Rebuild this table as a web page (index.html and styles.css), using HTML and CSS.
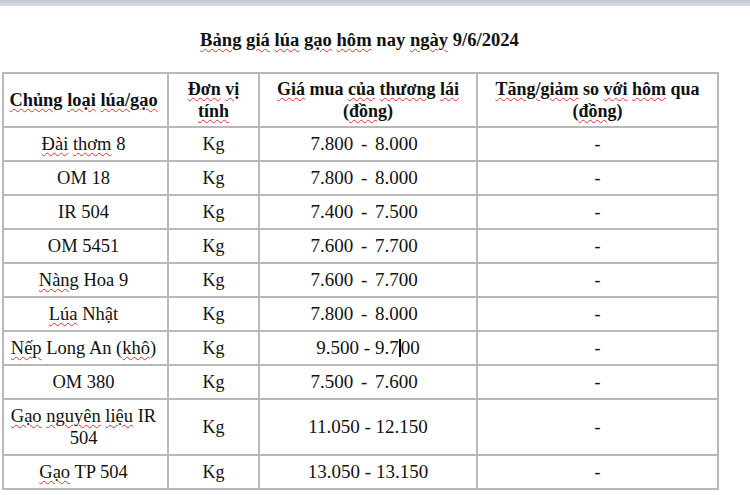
FILE: index.html
```html
<!DOCTYPE html>
<html lang="vi">
<head>
<meta charset="utf-8">
<title>Bảng giá lúa gạo</title>
<link rel="stylesheet" href="styles.css">
</head>
<body>
<div class="topbar"></div>
<div class="doc">
  <h1 class="title"><span class="sp">Bảng</span> <span class="sp">giá</span> <span class="sp">lúa</span> <span class="sp">gạo</span> <span class="sp">hôm</span> nay <span class="sp">ngày</span> 9/6/2024</h1>
  <table class="price">
    <colgroup>
      <col class="c1"><col class="c2"><col class="c3"><col class="c4">
    </colgroup>
    <thead>
      <tr class="head">
        <th class="name"><span class="sp">Chủng</span> <span class="sp">loại</span> <span class="sp">lúa/gạo</span></th>
        <th><span class="sp">Đơn</span> <span class="sp">vị</span><br><span class="sp">tính</span></th>
        <th><span class="sp">Giá</span> mua <span class="sp">của</span> <span class="sp">thương</span> <span class="sp">lái</span><br>(<span class="sp">đồng</span>)</th>
        <th><span class="sp">Tăng/giảm</span> so <span class="sp">với</span> <span class="sp">hôm</span> qua<br>(<span class="sp">đồng</span>)</th>
      </tr>
    </thead>
    <tbody>
      <tr><td class="name"><span class="sp">Đài</span> <span class="sp">thơm</span> 8</td><td>Kg</td><td class="num wide">7.800 - 8.000&nbsp;</td><td>-</td></tr>
      <tr><td class="name">OM 18</td><td>Kg</td><td class="num wide">7.800 - 8.000&nbsp;</td><td>-</td></tr>
      <tr><td class="name">IR 504</td><td>Kg</td><td class="num wide">7.400 - 7.500&nbsp;</td><td>-</td></tr>
      <tr><td class="name">OM 5451</td><td>Kg</td><td class="num wide">7.600 - 7.700&nbsp;</td><td>-</td></tr>
      <tr><td class="name"><span class="sp">Nàng</span> Hoa 9</td><td>Kg</td><td class="num wide">7.600 - 7.700&nbsp;</td><td>-</td></tr>
      <tr><td class="name"><span class="sp">Lúa</span> Nhật</td><td>Kg</td><td class="num wide">7.800 - 8.000&nbsp;</td><td>-</td></tr>
      <tr><td class="name"><span class="sp">Nếp</span> Long An (<span class="sp">khô</span>)</td><td>Kg</td><td class="num">9.500 - 9.7<span class="caret"></span>00</td><td>-</td></tr>
      <tr><td class="name">OM 380</td><td>Kg</td><td class="num wide">7.500 - 7.600&nbsp;</td><td>-</td></tr>
      <tr class="tall"><td class="name"><span class="sp">Gạo</span> <span class="sp">nguyên</span> <span class="sp">liệu</span> IR 504</td><td>Kg</td><td class="num">11.050 - 12.150</td><td>-</td></tr>
      <tr><td class="name"><span class="sp">Gạo</span> TP 504</td><td>Kg</td><td class="num">13.050 - 13.150</td><td>-</td></tr>
    </tbody>
  </table>
</div>
</body>
</html>
```
FILE: styles.css
```css
html, body {
  margin: 0;
  padding: 0;
  background: #ffffff;
}
body {
  font-family: "Liberation Serif", "Times New Roman", serif;
  color: #111111;
  font-size: 18px;
  width: 750px;
  height: 495px;
  overflow: hidden;
}
.topbar {
  height: 6px;
  background: linear-gradient(#c4c9cf, #d9dde2);
}
.doc {
  padding-left: 2px;
}
.title {
  margin: 0;
  padding-top: 24px;
  height: 42px;
  box-sizing: border-box;
  font-size: 18.6px;
  font-weight: bold;
  line-height: 20px;
  text-align: center;
  width: 715px;
}
.sp {
  text-decoration: underline wavy #e03030;
  text-decoration-thickness: 1px;
  text-underline-offset: 2px;
}
.price {
  border-collapse: collapse;
  table-layout: fixed;
  width: 715px;
  margin-top: 24px;
}
.c1 { width: 165px; }
.c2 { width: 91px; }
.c3 { width: 218px; }
.c4 { width: 241px; }
.price th,
.price td {
  border: 2px solid #b9b9b9;
  padding: 0 4px;
  text-align: center;
  vertical-align: middle;
  line-height: 22px;
}
.price th {
  font-weight: bold;
  font-size: 18px;
}
.price .name {
  font-size: 18.5px;
  padding: 0 6px 0 2px;
}
.price th.name {
  font-size: 18.4px;
}
.price .num {
  font-size: 19px;
  white-space: nowrap;
}
.price .num.wide {
  word-spacing: 3px;
}
.head {
  height: 54px;
}
.price tbody tr {
  height: 34px;
}
.price tbody tr.tall {
  height: 56px;
}
.caret {
  display: inline-block;
  width: 0;
  height: 18px;
  border-left: 2px solid #000;
  vertical-align: -3px;
}
```
